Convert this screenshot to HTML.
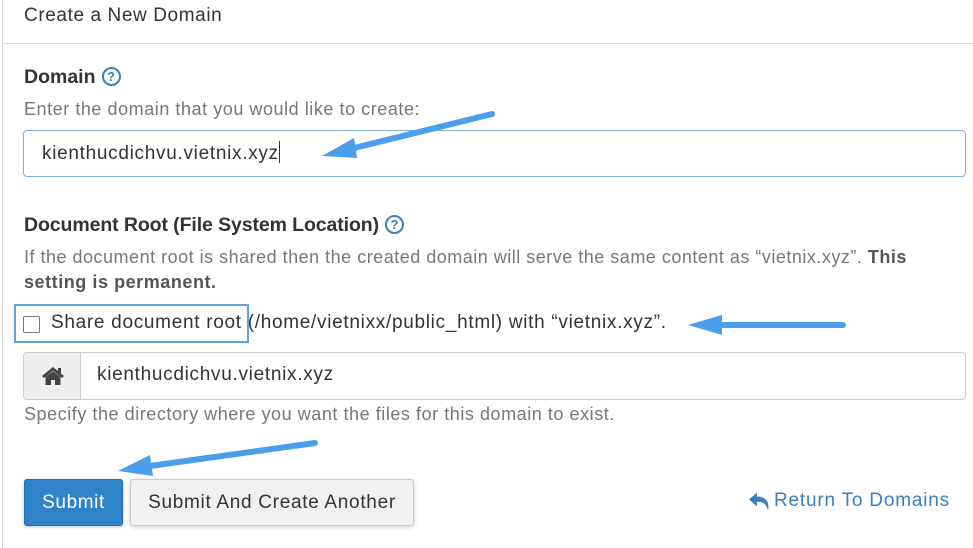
<!DOCTYPE html>
<html><head><style>
body{margin:0;width:973px;height:548px;background:#fff;font-family:"Liberation Sans",sans-serif;color:#333;position:relative;overflow:hidden}
.a{position:absolute;white-space:nowrap}
.vl{position:absolute;left:2px;top:0;width:1px;height:548px;background:#ddd}
.hl{position:absolute;left:2px;top:43px;width:971px;height:1px;background:#ddd}
.inp{position:absolute;border:1px solid #ccc;border-radius:4px;box-sizing:border-box}
.q{display:inline-block;width:15px;height:15px;border:2px solid #3a7fc0;border-radius:50%;color:#3a7fc0;font-size:13px;font-weight:bold;text-align:center;line-height:15px;vertical-align:2px;margin-left:6px;letter-spacing:0}
.h{font-size:18px;color:#777;letter-spacing:.55px}
.t{font-size:19px;letter-spacing:.7px}
</style></head><body>
<div class="vl"></div><div class="hl"></div>
<div class="a t" style="left:24px;top:5px;color:#333;letter-spacing:.6px">Create a New Domain</div>
<div class="a" style="left:24px;top:66px;font-size:19.5px;font-weight:bold;letter-spacing:0">Domain<span class="q">?</span></div>
<div class="a h" style="left:24px;top:99px">Enter the domain that you would like to create:</div>
<div class="inp" style="left:23px;top:130px;width:943px;height:47px;border-color:#7fb0d8"></div>
<div class="a t" style="left:42px;top:141px;color:#333">kienthucdichvu.vietnix.xyz<span style="display:inline-block;width:1px;height:22px;background:#333;vertical-align:-4px"></span></div>
<div class="a" style="left:24px;top:214px;font-size:19.5px;font-weight:bold;letter-spacing:-.1px">Document Root (File System Location)<span class="q">?</span></div>
<div class="a h" style="left:24px;top:247px;letter-spacing:.5px">If the document root is shared then the created domain will serve the same content as “vietnix.xyz”. <b style="color:#555">This</b></div>
<div class="a h" style="left:24px;top:272px;color:#555;font-weight:bold">setting is permanent.</div>
<div class="a" style="left:14px;top:304px;width:231px;height:35px;border:2px solid #5aa5e6"></div>
<div class="a" style="left:23px;top:316px;width:15px;height:15px;border:1.5px solid #777;border-radius:2px"></div>
<div class="a t" style="left:51px;top:312px;color:#333">Share document root <span>(/home/vietnixx/public_html) with “vietnix.xyz”.</span></div>
<div class="inp" style="left:23px;top:352px;width:943px;height:48px"></div>
<div class="a" style="left:24px;top:353px;width:56px;height:46px;background:#eee;border-right:1px solid #ccc;border-radius:4px 0 0 4px"></div>
<svg class="a" style="left:41px;top:366px" width="24" height="20" viewBox="0 0 24 20"><path d="M12 1 L1 10 L3 12 L12 4.5 L21 12 L23 10 Z" fill="#444"/><path d="M4.5 11 L12 5 L19.5 11 V19 H14 V14 H10 V19 H4.5 Z" fill="#444"/><rect x="17" y="2" width="3" height="5" fill="#444"/></svg>
<div class="a t" style="left:97px;top:364px;color:#333">kienthucdichvu.vietnix.xyz</div>
<div class="a h" style="left:24px;top:404px">Specify the directory where you want the files for this domain to exist.</div>
<div class="a" style="left:24px;top:479px;width:99px;height:47px;background:#2f83c9;border:1px solid #2a6fa9;border-radius:3px;box-sizing:border-box;color:#fff;font-size:19px;letter-spacing:.6px;text-align:center;line-height:45px;box-shadow:0 1px 3px rgba(0,0,0,.25)">Submit</div>
<div class="a" style="left:130px;top:479px;width:284px;height:47px;background:#f0f0f0;border:1px solid #ccc;border-radius:3px;box-sizing:border-box;color:#333;font-size:19px;letter-spacing:.7px;text-align:center;line-height:45px;box-shadow:0 1px 4px rgba(0,0,0,.2)">Submit And Create Another</div>
<svg class="a" style="left:749px;top:491px" width="22" height="21" viewBox="0 0 22 20"><path d="M8 1 L0 8 L8 15 V10.5 C14 10 17 12 19 19 C21 10 16 5 8 5 Z" fill="#3a7fc0"/></svg>
<div class="a" style="left:774px;top:490px;font-size:19px;color:#3a7fc0;letter-spacing:.8px">Return To Domains</div>
<svg class="a" style="left:0;top:0" width="973" height="548">
<g stroke="#4a9eea" stroke-width="6" stroke-linecap="round" fill="#4a9eea">
<line x1="492" y1="114" x2="350" y2="149"/>
<line x1="843" y1="325" x2="715" y2="325"/>
<line x1="315" y1="443" x2="150" y2="466"/>
</g>
<g fill="#4a9eea">
<polygon points="322,156 354,138 357,158"/>
<polygon points="688,325 722,315 722,335"/>
<polygon points="118,471 150,455 153,476"/>
</g>
</svg>
</body></html>
